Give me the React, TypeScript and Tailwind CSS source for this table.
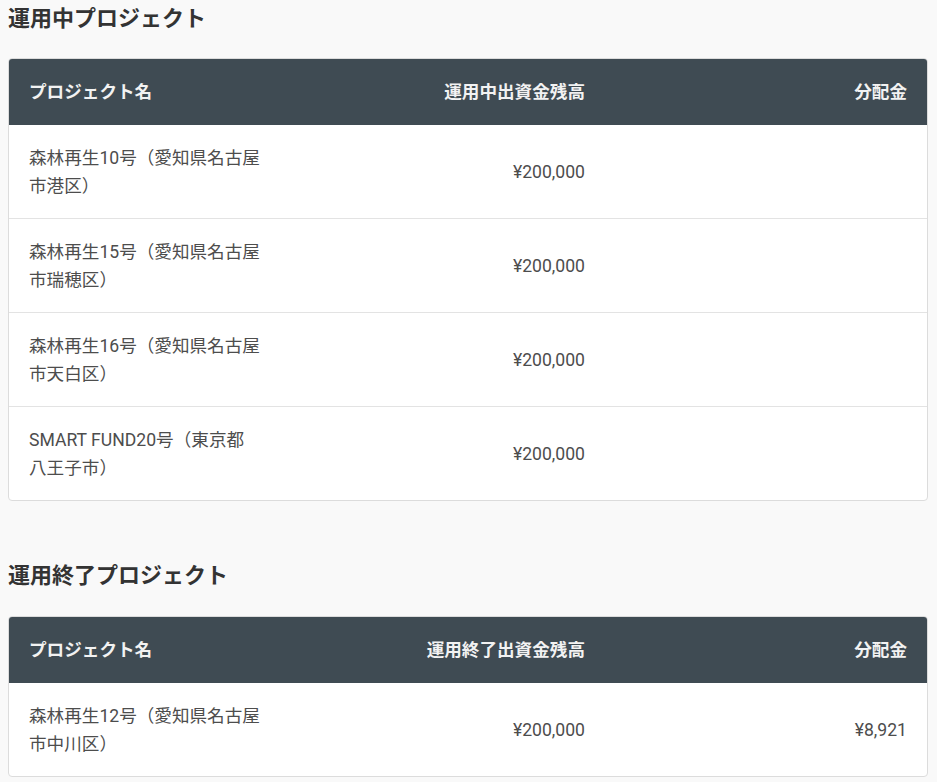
import React from "react";

type Row = { name: string; balance: string; dividend?: string };

const activeRows: Row[] = [
  { name: "森林再生10号（愛知県名古屋市港区）", balance: "¥200,000" },
  { name: "森林再生15号（愛知県名古屋市瑞穂区）", balance: "¥200,000" },
  { name: "森林再生16号（愛知県名古屋市天白区）", balance: "¥200,000" },
  { name: "SMART FUND20号（東京都八王子市）", balance: "¥200,000" },
];

const finishedRows: Row[] = [
  { name: "森林再生12号（愛知県名古屋市中川区）", balance: "¥200,000", dividend: "¥8,921" },
];

const ProjectTable = ({ balanceLabel, rows }: { balanceLabel: string; rows: Row[] }) => (
  <div className="w-[920px] overflow-hidden rounded-[4px] border border-[#dcdcdc] bg-white">
    <table className="w-full table-fixed border-collapse">
      <colgroup>
        <col className="w-[272px]" />
        <col className="w-[324px]" />
        <col />
      </colgroup>
      <thead className="bg-[#3f4b53] text-[#f2f2f2]">
        <tr>
          <th className="px-5 py-[19px] text-left font-bold">プロジェクト名</th>
          <th className="px-5 py-[19px] text-right font-bold">{balanceLabel}</th>
          <th className="px-5 py-[19px] text-right font-bold">分配金</th>
        </tr>
      </thead>
      <tbody className="text-[#4d4d4d]">
        {rows.map((row, i) => (
          <tr key={i} className="border-b border-[#e3e3e3] last:border-b-0 align-middle">
            <td className="px-5 py-[18.5px] text-left">{row.name}</td>
            <td className="px-5 py-[18.5px] text-right">{row.balance}</td>
            <td className="px-5 py-[18.5px] text-right">{row.dividend || ""}</td>
          </tr>
        ))}
      </tbody>
    </table>
  </div>
);

export default function App() {
  return (
    <div
      className="min-h-screen bg-[#f9f9f9] pl-2 pr-[9px] text-[17.6px] leading-[28px]"
      style={{ fontFamily: 'Roboto, "Noto Sans CJK JP", sans-serif' }}
    >
      {/* --- Active projects --- */}
      <h2 className="mb-[20px] text-[22px] font-bold leading-[38px] text-[#333]">
        運用中プロジェクト
      </h2>
      <ProjectTable balanceLabel="運用中出資金残高" rows={activeRows} />

      {/* --- Finished projects --- */}
      <h2 className="mt-[56px] mb-[21px] text-[22px] font-bold leading-[38px] text-[#333]">
        運用終了プロジェクト
      </h2>
      <ProjectTable balanceLabel="運用終了出資金残高" rows={finishedRows} />
    </div>
  );
}
